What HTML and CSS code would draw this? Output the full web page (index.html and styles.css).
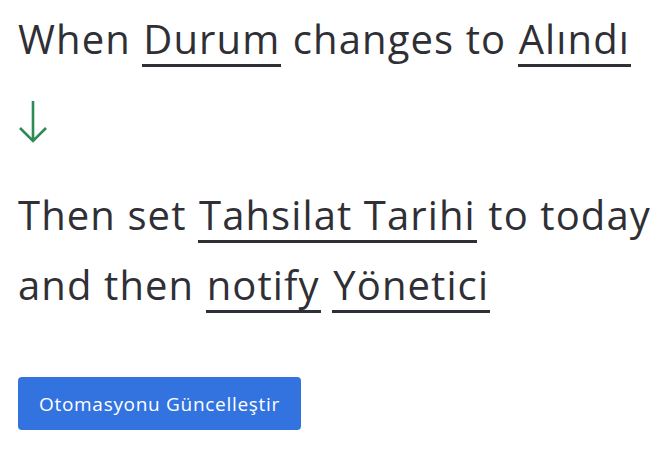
FILE: index.html
```html
<!DOCTYPE html>
<html lang="en">
<head>
    <meta charset="UTF-8">
    <meta name="viewport" content="width=device-width, initial-scale=1.0">
    <title>Otomasyon</title>
    <link rel="stylesheet" href="styles.css">
</head>
<body>
    <div class="rule">
        <p class="line">When <span class="token">Durum</span> changes to <span class="token">Alındı</span></p>
        <div class="arrow">
            <svg width="30" height="44" viewBox="0 0 30 44">
                <path d="M15 1 V41 M2 28 L15 41 L28 28" fill="none" stroke="#2f8a55" stroke-width="2.6"/>
            </svg>
        </div>
        <p class="line">Then set <span class="token">Tahsilat Tarihi</span> to today<br>and then <span class="token">notify</span> <span class="token">Yönetici</span></p>
        <button class="save">Otomasyonu Güncelleştir</button>
    </div>
</body>
</html>
```

FILE: styles.css
```css
body {
    margin: 0;
    background: #fff;
    color: #2f2f35;
    font-family: "Open Sans", sans-serif;
}
.rule {
    padding: 4px 0 4px 18px;
}
.line {
    margin: 0;
    font-size: 40px;
    letter-spacing: 1.1px;
    line-height: 70px;
    white-space: nowrap;
}
.token {
    display: inline-block;
    line-height: 40px;
    border-bottom: 3px solid #2f2f35;
    padding: 0 1px 5px;
}
.arrow {
    margin: 26px 0 36px;
    height: 44px;
}
.arrow svg {
    display: block;
}
.save {
    margin-top: 57px;
    background: #3273e0;
    color: #fff;
    border: none;
    border-radius: 4px;
    padding: 0 21px;
    height: 53px;
    font-family: "Open Sans", sans-serif;
    font-size: 19px;
    letter-spacing: 0.7px;
    cursor: pointer;
}
```
